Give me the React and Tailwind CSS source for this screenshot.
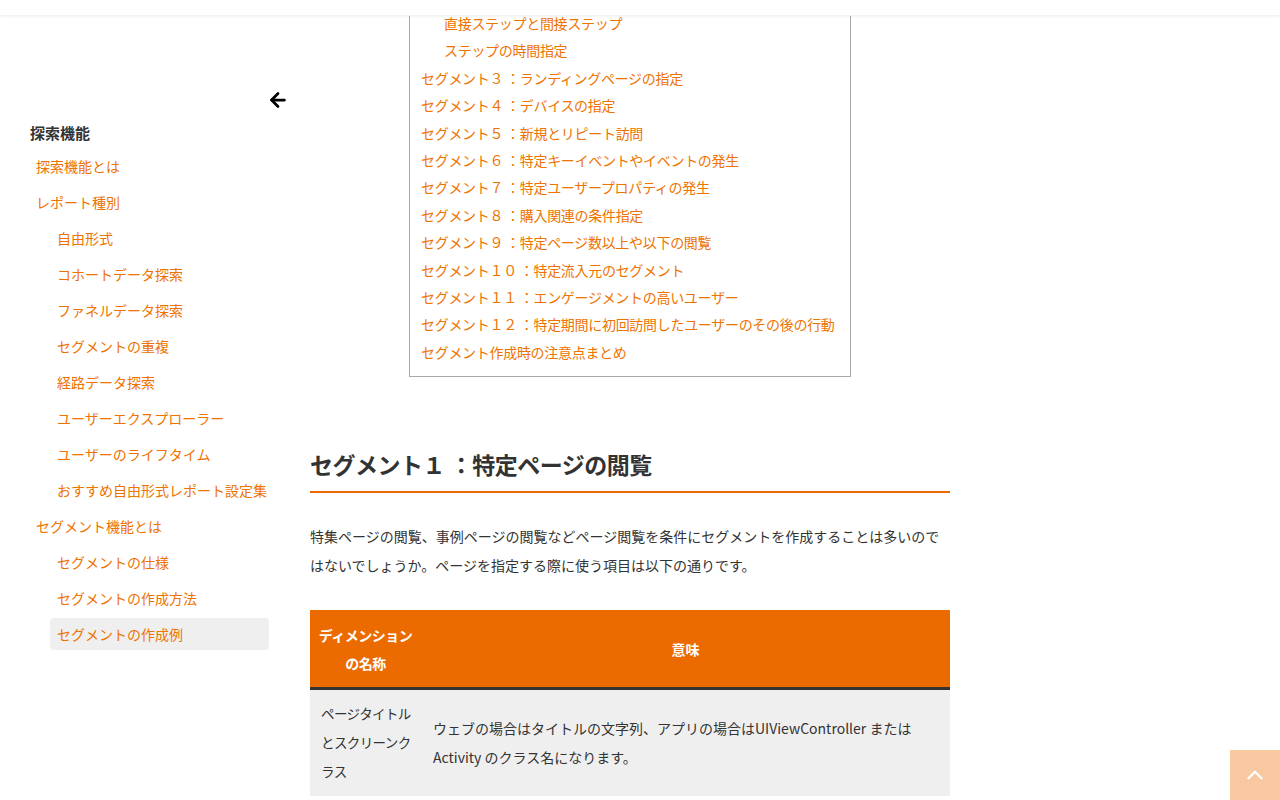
import React from "react";
import { ArrowLeft, ChevronUp } from "lucide-react";

const font = { fontFamily: '"Noto Sans CJK JP", "Noto Sans", sans-serif' };

const sideItems = [
  { t: "探索機能とは", l: 1 },
  { t: "レポート種別", l: 1 },
  { t: "自由形式", l: 2 },
  { t: "コホートデータ探索", l: 2 },
  { t: "ファネルデータ探索", l: 2 },
  { t: "セグメントの重複", l: 2 },
  { t: "経路データ探索", l: 2 },
  { t: "ユーザーエクスプローラー", l: 2 },
  { t: "ユーザーのライフタイム", l: 2 },
  { t: "おすすめ自由形式レポート設定集", l: 2 },
  { t: "セグメント機能とは", l: 1 },
  { t: "セグメントの仕様", l: 2 },
  { t: "セグメントの作成方法", l: 2 },
  { t: "セグメントの作成例", l: 2, active: true },
];

const toc = [
  { t: "直接ステップと間接ステップ", n: true },
  { t: "ステップの時間指定", n: true },
  { t: "セグメント３ ：ランディングページの指定" },
  { t: "セグメント４ ：デバイスの指定" },
  { t: "セグメント５ ：新規とリピート訪問" },
  { t: "セグメント６ ：特定キーイベントやイベントの発生" },
  { t: "セグメント７ ：特定ユーザープロパティの発生" },
  { t: "セグメント８ ：購入関連の条件指定" },
  { t: "セグメント９ ：特定ページ数以上や以下の閲覧" },
  { t: "セグメント１０ ：特定流入元のセグメント" },
  { t: "セグメント１１ ：エンゲージメントの高いユーザー" },
  { t: "セグメント１２ ：特定期間に初回訪問したユーザーのその後の行動" },
  { t: "セグメント作成時の注意点まとめ" },
];

export default function App() {
  return (
    <div className="relative w-[1280px] h-[800px] overflow-hidden bg-white text-[#333]" style={font}>
      <div className="absolute top-0 left-0 right-0 h-[16px] bg-white shadow-[0_1px_2px_rgba(0,0,0,0.05)] border-b border-[#f3f3f3] z-10" />
      <div className="flex">
        <aside className="w-[290px] shrink-0 pt-[90px]">
          <div className="flex justify-end pr-[1px] h-[20px] items-center">
            <ArrowLeft size={22} strokeWidth={3} className="text-black" />
          </div>
          <div className="mt-[11px] pl-[30px] text-[15px] font-bold leading-[24px] text-[#333]">探索機能</div>
          <ul className="mt-[5px] flex flex-col gap-[4px] pr-[21px]">
            {sideItems.map((it, i) => (
              <li
                key={i}
                className={
                  "h-[32px] flex items-center text-[14px] text-[#ee7300] rounded-[4px] px-[7px] whitespace-nowrap " +
                  (it.l === 1 ? "ml-[29px] " : "ml-[50px] ") +
                  (it.active ? "bg-[#efefef]" : "")
                }
              >
                {it.t}
              </li>
            ))}
          </ul>
        </aside>
        <main className="ml-[20px] w-[640px] shrink-0">
          <div className="mx-auto w-[442px] border border-[#aaa] pt-[9px] pb-[10px] pl-[11px]">
            {toc.map((it, i) => (
              <div
                key={i}
                className={"text-[14px] leading-[27.4px] text-[#ee7300] whitespace-nowrap tracking-[-0.3px] " + (it.n ? "pl-[23px]" : "")}
              >
                {it.t}
              </div>
            ))}
          </div>
          <h2 className="mt-[70px] pb-[9px] border-b-2 border-[#ec6b00] text-[23px] font-bold leading-[35px] text-[#333] tracking-[-0.5px]">
            セグメント１ ：特定ページの閲覧
          </h2>
          <p className="mt-[29px] text-[14px] leading-[29px] text-[#333]">
            特集ページの閲覧、事例ページの閲覧などページ閲覧を条件にセグメントを作成することは多いのではないでしょうか。ページを指定する際に使う項目は以下の通りです。
          </p>
          <table className="mt-[30px] w-full border-collapse text-[14px]">
            <thead>
              <tr className="bg-[#ec6b00] text-white border-b-[3px] border-[#333]">
                <th className="w-[111px] px-[8px] pt-[11px] pb-[10px] text-center font-bold leading-[28px] text-[14px] whitespace-nowrap tracking-[-0.5px]">
                  ディメンション<br />の名称
                </th>
                <th className="px-[12px] pt-[11px] pb-[10px] text-center font-bold leading-[28px]">意味</th>
              </tr>
            </thead>
            <tbody>
              <tr className="bg-[#efefef]">
                <td className="pl-[11px] pr-[4px] pt-[9px] pb-[10px] leading-[29px] whitespace-nowrap text-[13.5px] tracking-[-0.6px] align-middle">
                  ページタイトル<br />とスクリーンク<br />ラス
                </td>
                <td className="pl-[12px] pr-[12px] pt-[9px] pb-[10px] leading-[29px] align-middle">
                  ウェブの場合はタイトルの文字列、アプリの場合はUIViewController または Activity のクラス名になります。
                </td>
              </tr>
            </tbody>
          </table>
        </main>
      </div>
      <div className="absolute right-0 bottom-0 w-[50px] h-[50px] bg-[#f8c9a0] flex items-center justify-center">
        <ChevronUp size={26} strokeWidth={2.2} className="text-white" />
      </div>
    </div>
  );
}
